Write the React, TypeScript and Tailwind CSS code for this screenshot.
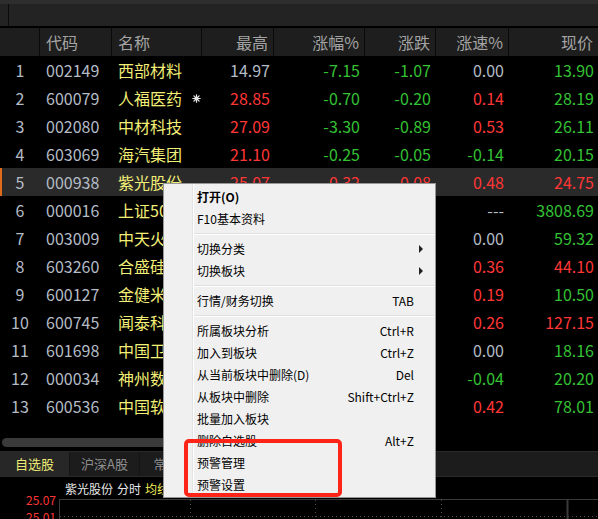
import React from 'react';

type C = 'r' | 'g' | 'n';

const color: Record<C, string> = {
  r: 'text-[#ff3636]',
  g: 'text-[#34c234]',
  n: 'text-[#b4bcc6]',
};

// index, code, name, star, high, change%, change, speed%, price
const rows: [number, string, string, boolean, [string, C], [string, C], [string, C], [string, C], [string, C]][] = [
  [1, '002149', '西部材料', false, ['14.97', 'n'], ['-7.15', 'g'], ['-1.07', 'g'], ['0.00', 'n'], ['13.90', 'g']],
  [2, '600079', '人福医药', true, ['28.85', 'r'], ['-0.70', 'g'], ['-0.20', 'g'], ['0.14', 'r'], ['28.19', 'g']],
  [3, '002080', '中材科技', false, ['27.09', 'r'], ['-3.30', 'g'], ['-0.89', 'g'], ['0.53', 'r'], ['26.11', 'g']],
  [4, '603069', '海汽集团', false, ['21.10', 'r'], ['-0.25', 'g'], ['-0.05', 'g'], ['-0.14', 'g'], ['20.15', 'g']],
  [5, '000938', '紫光股份', false, ['25.07', 'r'], ['0.32', 'r'], ['0.08', 'r'], ['0.48', 'r'], ['24.75', 'r']],
  [6, '000016', '上证50', false, ['3842.10', 'r'], ['-0.41', 'g'], ['-15.62', 'g'], ['---', 'n'], ['3808.69', 'g']],
  [7, '003009', '中天火箭', false, ['60.88', 'r'], ['-1.33', 'g'], ['-0.80', 'g'], ['0.00', 'n'], ['59.32', 'g']],
  [8, '603260', '合盛硅业', false, ['44.50', 'r'], ['0.80', 'r'], ['0.35', 'r'], ['0.36', 'r'], ['44.10', 'r']],
  [9, '600127', '金健米业', false, ['10.78', 'r'], ['-1.13', 'g'], ['-0.12', 'g'], ['0.19', 'r'], ['10.50', 'g']],
  [10, '600745', '闻泰科技', false, ['128.00', 'r'], ['1.62', 'r'], ['2.03', 'r'], ['0.26', 'r'], ['127.15', 'r']],
  [11, '601698', '中国卫星', false, ['18.40', 'r'], ['-0.87', 'g'], ['-0.16', 'g'], ['0.00', 'n'], ['18.16', 'g']],
  [12, '000034', '神州数码', false, ['20.55', 'r'], ['-0.93', 'g'], ['-0.19', 'g'], ['-0.04', 'g'], ['20.20', 'g']],
  [13, '600536', '中国软件', false, ['79.10', 'r'], ['-0.45', 'g'], ['-0.35', 'g'], ['0.42', 'r'], ['78.01', 'g']],
];

const cols = 'grid grid-cols-[40px_72px_90px_72px_91px_71px_73px_89px]';

type Item =
  | { sep: true }
  | { label: string; key?: string; bold?: boolean; sub?: boolean; sep?: false };

const menu: Item[] = [
  { label: '打开(O)', bold: true },
  { label: 'F10基本资料' },
  { sep: true },
  { label: '切换分类', sub: true },
  { label: '切换板块', sub: true },
  { sep: true },
  { label: '行情/财务切换', key: 'TAB' },
  { sep: true },
  { label: '所属板块分析', key: 'Ctrl+R' },
  { label: '加入到板块', key: 'Ctrl+Z' },
  { label: '从当前板块中删除(D)', key: 'Del' },
  { label: '从板块中删除', key: 'Shift+Ctrl+Z' },
  { label: '批量加入板块' },
  { label: '删除自选股', key: 'Alt+Z' },
  { label: '预警管理' },
  { label: '预警设置' },
];

function Star() {
  return (
    <svg width="9" height="9" viewBox="0 0 9 9" className="text-[#e8e8e8]">
      <g stroke="currentColor" strokeWidth="1.2" strokeLinecap="round">
        <line x1="4.5" y1="0.8" x2="4.5" y2="8.2" />
        <line x1="0.8" y1="4.5" x2="8.2" y2="4.5" />
        <line x1="1.9" y1="1.9" x2="7.1" y2="7.1" />
        <line x1="7.1" y1="1.9" x2="1.9" y2="7.1" />
      </g>
      <circle cx="4.5" cy="4.5" r="2" fill="currentColor" />
    </svg>
  );
}

function ContextMenu() {
  return (
    <div className="absolute left-[163px] top-[183px] w-[273px] h-[315px] bg-[#f0f0f0] border border-[#979797] flex text-[12px] text-black">
      <div className="w-[29px] border-r border-[#e2e3e3] shadow-[1px_0_0_#ffffff]" />
      <div className="flex-1 flex flex-col pt-[2px] pr-[1px]">
        {menu.map((m, i) =>
          m.sep ? (
            <div key={i} className="h-[8px] flex flex-col justify-center pl-[1px]">
              <div className="h-px bg-[#e0e0e0]" />
              <div className="h-px bg-white" />
            </div>
          ) : (
            <div key={i} className="h-[22px] flex items-center pl-[4px]">
              <span className={`flex-1 ${m.bold ? 'font-bold' : ''}`}>{m.label}</span>
              {m.key && <span>{m.key}</span>}
              <span className="w-[20px] pl-[5px] flex items-center">
                {m.sub && (
                  <span className="w-0 h-0 border-y-[4px] border-y-transparent border-l-[4px] border-l-[#202020]" />
                )}
              </span>
            </div>
          )
        )}
      </div>
    </div>
  );
}

export default function App() {
  return (
    <div
      className="relative w-[598px] h-[519px] bg-black overflow-hidden flex flex-col select-none"
      style={{ fontFamily: '"Noto Sans CJK SC", "Noto Sans", sans-serif' }}
    >
      {/* top strip & toolbar */}
      <div className="h-[4px] shrink-0 bg-[#2e2e2e]" />
      <div className="h-[22px] shrink-0 bg-[#232323] flex">
        <div className="w-[9px] border-r border-[#0c0c0c]" />
      </div>
      <div className="h-[2px] shrink-0 bg-black" />

      {/* header */}
      <div className={`${cols} h-[28px] shrink-0 bg-[#1e1e1e] text-[16px] text-[#a4a4a4] leading-[28px]`}>
        {['', '代码', '名称', '最高', '涨幅%', '涨跌', '涨速%', '现价'].map((h, i) => (
          <div
            key={i}
            className={`h-full flex items-center ${i === 7 ? '' : 'border-r border-[#0a0a0a]'} ${
              i === 1 || i === 2 ? 'justify-start pl-[6px]' : 'justify-end pr-[5px]'
            }`}
          >
            {h}
          </div>
        ))}
      </div>

      {/* rows */}
      <div className="flex flex-col shrink-0 text-[16px]">
        {rows.map(([idx, code, name, star, hi, pct, chg, spd, price]) => (
          <div
            key={idx}
            className={`${cols} h-[28px] items-center ${
              idx === 5 ? 'bg-[#2a2a2a] shadow-[inset_2px_0_0_#e06a1c]' : ''
            }`}
          >
            <div className="text-center text-[#b4bcc6]">{idx}</div>
            <div className="pl-[6px] text-[#b4bcc6]">{code}</div>
            <div className="pl-[6px] pr-[1px] flex items-center justify-between text-[#f2ee76]">
              <span>{name}</span>
              {star && <Star />}
            </div>
            <div className={`text-right pr-[4px] ${color[hi[1]]}`}>{hi[0]}</div>
            <div className={`text-right pr-[5px] ${color[pct[1]]}`}>{pct[0]}</div>
            <div className={`text-right pr-[5px] ${color[chg[1]]}`}>{chg[0]}</div>
            <div className={`text-right pr-[5px] ${color[spd[1]]}`}>{spd[0]}</div>
            <div className={`text-right pr-[4px] ${color[price[1]]}`}>{price[0]}</div>
          </div>
        ))}
      </div>

      <div className="flex-1" />

      {/* horizontal scrollbar */}
      <div className="h-[12px] shrink-0 pt-[2px] pl-[2px]">
        <div className="w-[380px] h-[9px] rounded-full bg-[#3a3a3a]" />
      </div>
      <div className="h-[3px] shrink-0" />

      {/* tabs */}
      <div className="h-[26px] shrink-0 bg-[#1c1c1c] border-y border-[#2a2a2a] flex text-[13px]">
        <div className="w-[70px] bg-[#272727] border-r border-[#141414] flex items-center justify-center text-[#ecea74]">
          自选股
        </div>
        <div className="w-[70px] border-r border-[#141414] flex items-center justify-center text-[#8e8e8e]">
          沪深A股
        </div>
        <div className="w-[80px] border-r border-[#141414] flex items-center justify-center text-[#8e8e8e]">
          常用指数
        </div>
      </div>

      {/* intraday chart */}
      <div className="h-[42px] shrink-0 overflow-hidden flex text-[12px]">
        <div className="w-[60px] flex flex-col items-end pr-[3px] pt-[14px] leading-[17px] text-[#ff3636]">
          <span>25.07</span>
          <span>25.01</span>
        </div>
        <div className="flex-1 flex flex-col">
          <div className="h-[22px] shrink-0 pt-[2px] pl-[6px] flex items-center gap-[4px] text-[#e8e8e8]">
            <span>紫光股份</span>
            <span>分时</span>
            <span className="text-[#f2ee5a]">均线:24.92</span>
          </div>
          <div className="flex-1 border-t border-l border-[#3a3a3a]">
            <svg width="538" height="20" className="block">
              <line x1="0" y1="16.5" x2="538" y2="16.5" stroke="#4a4a4a" strokeDasharray="1 3" />
              <line x1="130.5" y1="0" x2="130.5" y2="20" stroke="#4a4a4a" strokeDasharray="1 3" />
              <line x1="255.5" y1="0" x2="255.5" y2="20" stroke="#4a4a4a" strokeDasharray="1 3" />
              <line x1="381.5" y1="0" x2="381.5" y2="20" stroke="#4a4a4a" strokeDasharray="1 3" />
              <line x1="507.5" y1="0" x2="507.5" y2="20" stroke="#3a3a3a" strokeWidth="2" />
            </svg>
          </div>
        </div>
      </div>

      <ContextMenu />

      {/* annotation */}
      <div className="absolute left-[184px] top-[439px] w-[158px] h-[58px] border-[4px] border-[#ff2418] rounded-[5px]" />
    </div>
  );
}
